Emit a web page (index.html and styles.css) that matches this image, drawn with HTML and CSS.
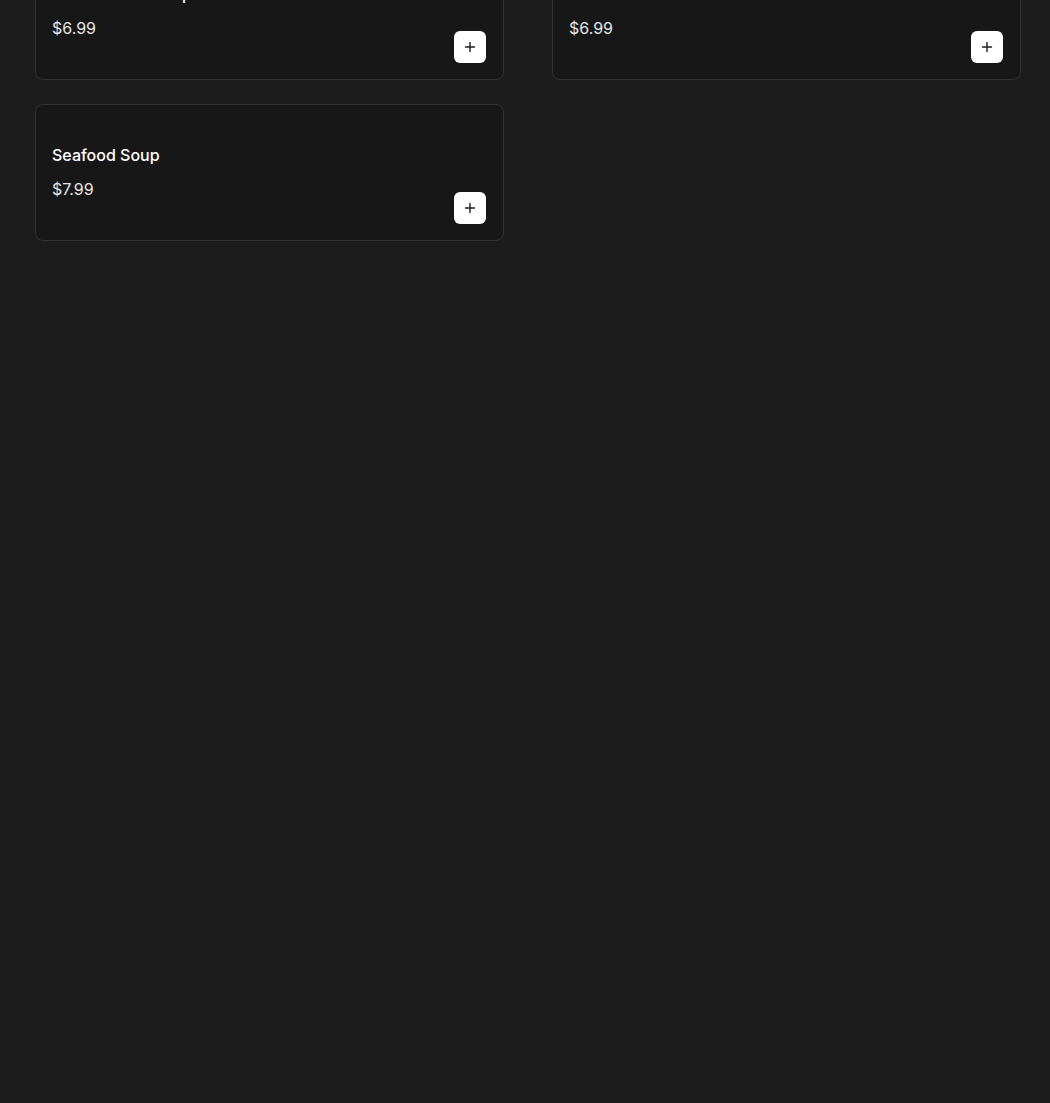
FILE: index.html
```html
<!DOCTYPE html>
<html lang="en">
<head>
<meta charset="utf-8">
<title>Menu</title>
<link rel="stylesheet" href="styles.css">
</head>
<body>
<main class="menu">
  <div class="grid">
    <article class="card">
      <div class="info">
        <h3 class="name">Pork Rib Fun Soup</h3>
        <p class="price">$6.99</p>
      </div>
      <button class="add" aria-label="Add">
        <svg width="12" height="12" viewBox="0 0 12 12"><path d="M6 1.5v9M1.5 6h9" stroke="#1c1c1c" stroke-width="1.4" stroke-linecap="round"/></svg>
      </button>
    </article>
    <article class="card">
      <div class="info">
        <h3 class="name">Wonton Rice Noodles</h3>
        <p class="price">$6.99</p>
      </div>
      <button class="add" aria-label="Add">
        <svg width="12" height="12" viewBox="0 0 12 12"><path d="M6 1.5v9M1.5 6h9" stroke="#1c1c1c" stroke-width="1.4" stroke-linecap="round"/></svg>
      </button>
    </article>
    <article class="card">
      <div class="info">
        <h3 class="name">Seafood Soup</h3>
        <p class="price">$7.99</p>
      </div>
      <button class="add" aria-label="Add">
        <svg width="12" height="12" viewBox="0 0 12 12"><path d="M6 1.5v9M1.5 6h9" stroke="#1c1c1c" stroke-width="1.4" stroke-linecap="round"/></svg>
      </button>
    </article>
  </div>
</main>
</body>
</html>
```
FILE: styles.css
```css
html, body {
  margin: 0;
  padding: 0;
  background: #1c1c1c;
  height: 100%;
  overflow: hidden;
}
body {
  font-family: "Inter", "DejaVu Sans", sans-serif;
  color: #fff;
}
.menu {
  padding: 0 29px 0 35px;
}
.grid {
  margin-top: -57px;
  display: grid;
  grid-template-columns: 469px 469px;
  column-gap: 48px;
  row-gap: 24px;
}
.card {
  box-sizing: border-box;
  height: 137px;
  border: 1px solid #333;
  border-radius: 8px;
  background: #171717;
  padding: 16px 17px 16px 16px;
  display: flex;
  align-items: center;
  justify-content: space-between;
}
.info {
  display: flex;
  flex-direction: column;
  gap: 10px;
  padding-bottom: 2px;
}
.name {
  margin: 0;
  font-size: 16px;
  line-height: 24px;
  font-weight: 500;
  color: #fff;
}
.price {
  margin: 0;
  font-size: 16px;
  line-height: 24px;
  color: #e6e6e6;
}
.add {
  align-self: flex-end;
  width: 32px;
  height: 32px;
  border: none;
  border-radius: 6px;
  background: #fff;
  display: flex;
  align-items: center;
  justify-content: center;
  padding: 0;
}
```
